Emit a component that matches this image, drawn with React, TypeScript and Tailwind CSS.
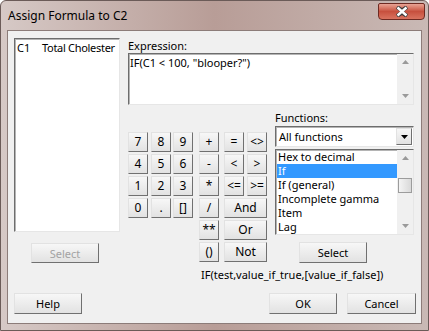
const font = "font-['Noto_Sans','Liberation_Sans',sans-serif]";

const raised =
  "flex items-center justify-center border border-t-[#e2e2e2] border-l-[#e2e2e2] border-b-[#707070] border-r-[#707070] bg-gradient-to-b from-[#f7f7f7] to-[#e2e2e2] text-[11px] leading-none text-black";

const sunken =
  "border border-t-[#6d6d6d] border-l-[#6d6d6d] border-b-[#e6e6e6] border-r-[#e6e6e6] bg-white shadow-[inset_1px_1px_0_#b4b4b4]";

function Arrow({ up, dark }: { up?: boolean; dark?: boolean }) {
  return (
    <svg width="7" height="4" viewBox="0 0 7 4">
      <path d={up ? "M0 4 L3.5 0 L7 4 Z" : "M0 0 L3.5 4 L7 0 Z"} fill={dark ? "#000" : "#9a9a9a"} />
    </svg>
  );
}

function ScrollBar({ thumb }: { thumb?: boolean }) {
  return (
    <div className="flex w-[16px] shrink-0 flex-col bg-[#f0f0f0]">
      <div className="flex h-[16px] items-center justify-center">
        <Arrow up />
      </div>
      {thumb && (
        <div className="ml-[1px] mt-[12px] h-[15px] w-[14px] border border-[#9c9c9c] bg-gradient-to-r from-[#f4f4f4] to-[#d9d9d9]" />
      )}
      <div className="mt-auto flex h-[16px] items-center justify-center">
        <Arrow />
      </div>
    </div>
  );
}

const keys: (string | null)[][] = [
  ["7", "8", "9", "+", "=", "<>"],
  ["4", "5", "6", "-", "<", ">"],
  ["1", "2", "3", "*", "<=", ">="],
  ["0", ".", "[]", "/", "And"],
  [null, null, null, "**", "Or"],
  [null, null, null, "()", "Not"],
];

function Keypad() {
  return (
    <div className="mt-[27px] grid w-[139px] grid-cols-[23px_22px_26px_25px_23px_20px] auto-rows-[20px] gap-y-[2px]">
      {keys.flatMap((row, r) =>
        row.map((k, c) => {
          if (k === null) return <div key={`${r}-${c}`} />;
          const wide = k === "And" || k === "Or" || k === "Not";
          return (
            <button
              key={`${r}-${c}`}
              className={`${raised} h-[20px] !text-[12px] ${wide ? "col-span-2 w-[43px]" : "w-[20px]"}`}
            >
              {k}
            </button>
          );
        })
      )}
    </div>
  );
}

const funcs = ["Hex to decimal", "If", "If (general)", "Incomplete gamma", "Item", "Lag"];

function Functions() {
  return (
    <div className="flex w-[139px] flex-col">
      <div className="mt-[5px] h-[15px] text-[11px] leading-[15px]">Functions:</div>
      <div className={`${sunken} mt-[1px] flex h-[21px] items-center`}>
        <span className="ml-[3px] flex-1 text-[11px] leading-none">All functions</span>
        <div className={`${raised} mr-[1px] h-[17px] w-[16px]`}>
          <Arrow dark />
        </div>
      </div>
      <div className={`${sunken} mt-[2px] flex h-[86px] overflow-hidden`}>
        <div className="flex flex-1 flex-col pl-[1px]">
          {funcs.map((f) => (
            <div
              key={f}
              className={`h-[14px] shrink-0 pl-[1px] text-[11px] leading-[14px] ${
                f === "If" ? "bg-[#3399ff] text-white" : "text-black"
              }`}
            >
              {f}
            </div>
          ))}
        </div>
        <ScrollBar thumb />
      </div>
      <button className={`${raised} ml-[24px] mt-[7px] h-[21px] w-[68px]`}>Select</button>
    </div>
  );
}

export default function App() {
  return (
    <div
      className={`${font} flex h-[331px] w-[429px] flex-col rounded-t-[6px] border border-[#6b5b58] bg-gradient-to-r from-[#d6c9c6] via-[#b89d97] to-[#c9b9b5] text-black`}
    >
      <div className="flex h-[29px] items-start">
        <span className="ml-[7px] mt-[7px] text-[12px] leading-[16px]">Assign Formula to C2</span>
        <div className="ml-auto mr-[3px] mt-[2px] flex h-[17px] w-[47px] items-center justify-center rounded-b-[4px] rounded-t-[2px] border border-[#6e2a22] bg-gradient-to-b from-[#e8a394] via-[#c7503e] to-[#d9735f]">
          <svg width="14" height="11" viewBox="0 0 14 11">
            <path
              d="M2 1 L7 4.5 L12 1 M2 10 L7 6.5 L12 10"
              stroke="#3b3b3b"
              strokeWidth="4"
              fill="none"
            />
            <path
              d="M2.5 1.5 L11.5 9.5 M11.5 1.5 L2.5 9.5"
              stroke="#fff"
              strokeWidth="2.4"
              fill="none"
            />
          </svg>
        </div>
      </div>

      <div className="mx-[6px] flex h-[294px] flex-col border border-[#8c7c79] bg-[#f0f0f0] pl-[6px] pt-[7px]">
        <div className="flex">
          <div className="flex w-[106px] flex-col">
            <div className={`${sunken} h-[194px] overflow-hidden pl-[2px] pt-[2px]`}>
              <div className="flex text-[11px] leading-[14px]">
                <span className="w-[25px] shrink-0">C1</span>
                <span className="whitespace-nowrap tracking-[-0.3px]">Total Cholester</span>
              </div>
            </div>
            <button className={`${raised} ml-[17px] mt-[11px] h-[20px] w-[68px] !text-[#a3a3a3] border-[#bdbdbd]`}>
              Select
            </button>
          </div>

          <div className="ml-[8px] flex w-[286px] flex-col">
            <div className="h-[15px] text-[11px] leading-[15px]">Expression:</div>
            <div className={`${sunken} flex h-[52px]`}>
              <div className="flex-1 pl-[1px] pt-[2px] text-[11px] leading-[14px]">
                IF(C1 &lt; 100, "blooper?")
              </div>
              <ScrollBar />
            </div>
            <div className="flex gap-[8px]">
              <Keypad />
              <Functions />
            </div>
            <div className="ml-[73px] mt-[4px] h-[15px] whitespace-nowrap text-[11px] leading-[15px]">
              IF(test,value_if_true,[value_if_false])
            </div>
          </div>
        </div>

        <div className="mt-[11px] flex">
          <button className={`${raised} h-[21px] w-[68px]`}>Help</button>
          <button className={`${raised} ml-auto h-[21px] w-[68px]`}>OK</button>
          <button className={`${raised} ml-[10px] mr-[5px] h-[21px] w-[69px]`}>Cancel</button>
        </div>
      </div>
    </div>
  );
}
